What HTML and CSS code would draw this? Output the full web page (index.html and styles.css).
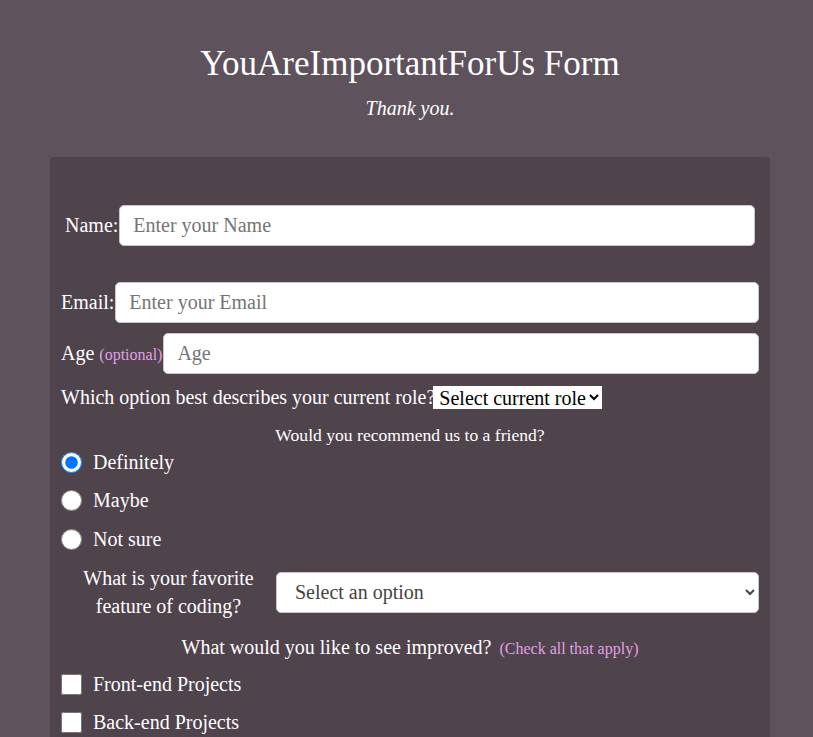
FILE: index.html
```html
<!DOCTYPE html>
<html lang="en">
<head>
<meta charset="utf-8">
<title>YouAreImportantForUs Form</title>
<link rel="stylesheet" href="styles.css">
</head>
<body>
<div class="page">
  <header class="header">
    <h1 class="title">YouAreImportantForUs Form</h1>
    <p class="subtitle">Thank you.</p>
  </header>
  <form class="card">
    <div class="field field-name">
      <label class="label" for="name">Name:</label>
      <input class="text-input" id="name" type="text" placeholder="Enter your Name">
    </div>
    <div class="field field-email">
      <label class="label" for="email">Email:</label>
      <input class="text-input" id="email" type="email" placeholder="Enter your Email">
    </div>
    <div class="field field-age">
      <label class="label" for="age">Age <span class="hint">(optional)</span></label>
      <input class="text-input" id="age" type="number" placeholder="Age">
    </div>
    <div class="field-role">
      <label class="label" for="role">Which option best describes your current role?</label><select class="plain-select" id="role"><option>Select current role</option></select>
    </div>
    <p class="question">Would you recommend us to a friend?</p>
    <label class="choice"><input class="radio" type="radio" name="rec" checked> Definitely</label>
    <label class="choice"><input class="radio" type="radio" name="rec"> Maybe</label>
    <label class="choice"><input class="radio" type="radio" name="rec"> Not sure</label>
    <div class="field-feature">
      <label class="feature-label" for="feature">What is your favorite feature of coding?</label>
      <select class="big-select" id="feature"><option>Select an option</option></select>
    </div>
    <p class="question question-improve">What would you like to see improved? <span class="hint">(Check all that apply)</span></p>
    <label class="choice choice-first-check"><input class="check" type="checkbox"> Front-end Projects</label>
    <label class="choice"><input class="check" type="checkbox"> Back-end Projects</label>
    <label class="choice"><input class="check" type="checkbox"> Data Visualization</label>
  </form>
</div>
</body>
</html>
```
FILE: styles.css
```css
html, body {
  margin: 0;
  padding: 0;
}
body {
  background: #5e535c;
  color: #fff;
  font-family: "Liberation Serif", "Times New Roman", serif;
  font-size: 20px;
}
.page {
  width: 720px;
  margin: 0 auto;
  padding-left: 7px;
}
.header {
  text-align: center;
  padding-top: 44px;
  padding-bottom: 37px;
}
.title {
  font-size: 35px;
  font-weight: normal;
  margin: 0;
  line-height: 40px;
}
.subtitle {
  font-style: italic;
  font-size: 20px;
  margin: 12px 0 0;
  line-height: 24px;
}
.card {
  background: #4f434c;
  border-radius: 4px;
  padding: 48px 11px 20px;
  display: flex;
  flex-direction: column;
}
.field {
  display: flex;
  align-items: center;
  gap: 1px;
}
.field-name {
  margin: 0 4px;
}
.field-email {
  margin-top: 36px;
}
.field-age {
  margin-top: 10px;
}
.label {
  font-size: 20px;
  white-space: nowrap;
}
.hint {
  color: #e1a1e4;
  font-size: 16px;
}
.text-input {
  flex: 1;
  height: 41px;
  box-sizing: border-box;
  border: 1px solid #c9c6ca;
  border-radius: 5px;
  padding: 0 13px;
  font-family: "Liberation Serif", "Times New Roman", serif;
  font-size: 20px;
  color: #222;
  background: #fff;
}
.text-input::placeholder {
  color: #757575;
}
.field-role {
  margin-top: 12px;
  display: flex;
  align-items: center;
}
.plain-select {
  font-family: "Liberation Serif", "Times New Roman", serif;
  font-size: 20px;
  height: 23px;
  border: none;
  border-radius: 0;
  background: #fff;
  color: #000;
  padding: 0 0 0 2px;
  margin-left: -2px;
}
.question {
  text-align: center;
  font-size: 17.6px;
  margin: 16px 0 0;
  line-height: 20px;
}
.choice {
  display: flex;
  align-items: center;
  gap: 11px;
  font-size: 20px;
  height: 22px;
  margin-top: 16.5px;
}
.question + .choice {
  margin-top: 6px;
}
.radio, .check {
  width: 21px;
  height: 21px;
  margin: 0;
}
.field-feature {
  margin-top: 14px;
  display: flex;
  align-items: center;
}
.feature-label {
  flex: 0 0 215px;
  text-align: center;
  font-size: 20px;
  line-height: 28px;
}
.big-select {
  flex: 1;
  height: 41px;
  box-sizing: border-box;
  border: 1px solid #c9c6ca;
  border-radius: 5px;
  padding: 0 14px;
  font-family: "Liberation Serif", "Times New Roman", serif;
  font-size: 20px;
  color: #444;
  background: #fff;
}
.question-improve {
  font-size: 20px;
  margin-top: 17px;
}
.question-improve .hint {
  margin-left: 3px;
}
.question + .choice-first-check {
  margin-top: 14px;
}
```
